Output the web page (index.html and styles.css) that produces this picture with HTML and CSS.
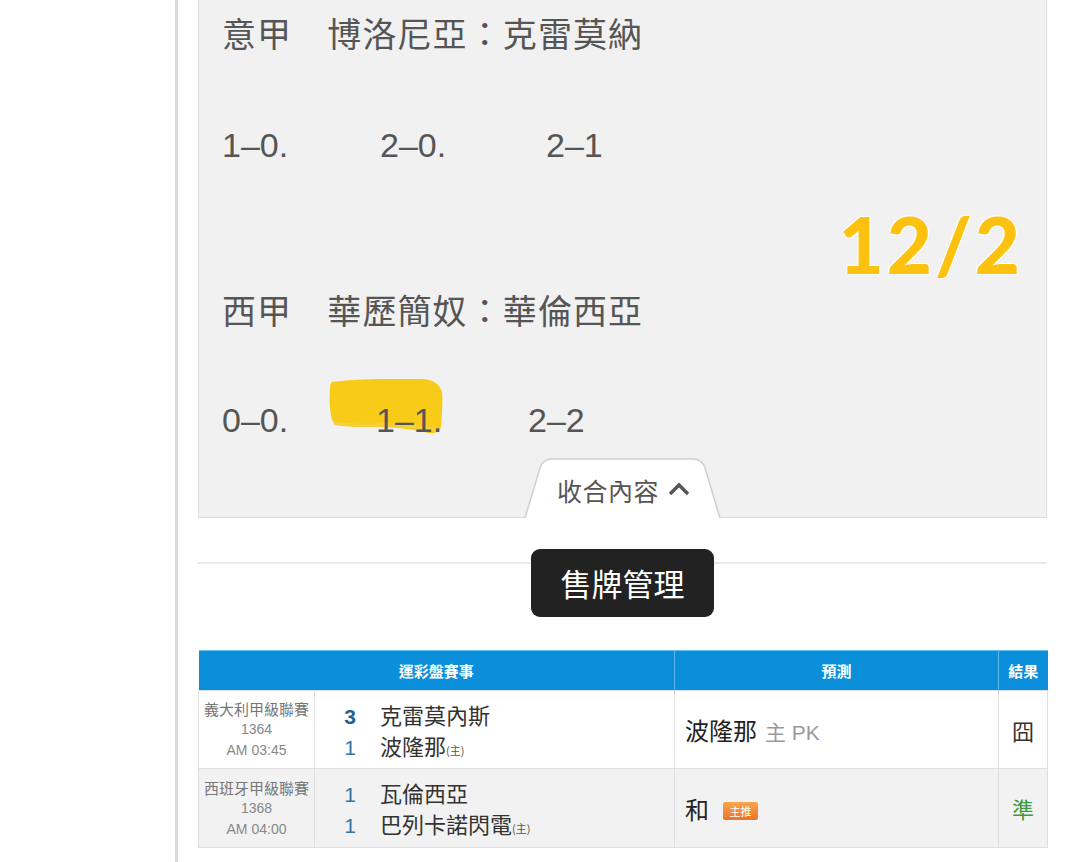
FILE: index.html
```html
<!DOCTYPE html>
<html lang="zh-Hant">
<head>
<meta charset="utf-8">
<title>售牌管理</title>
<link rel="stylesheet" href="styles.css">
</head>
<body>
<div class="page">
  <div class="post">
    <p class="line cjk l1">意甲　博洛尼亞：克雷莫納</p>
    <p class="line scores l2"><span class="s s1">1–0.</span><span class="s s2">2–0.</span><span class="s">2–1</span></p>
    <p class="line cjk l3">西甲　華歷簡奴：華倫西亞</p>
    <p class="line scores l4"><span class="s s1b">0–0.</span><span class="s mark-wrap s2b"><svg class="mark" width="116" height="58" viewBox="0 0 116 58"><path d="M4,5 C30,1 70,2 94,2 C104,2 112,7 114,15 C115,24 114,36 113,49 C112,56 104,58 96,55 C80,51 60,50 40,50 C26,50 12,50 6,47 C2,40 1,26 2,13 C2,8 3,6 4,5 Z" fill="#f8cb18"/><path d="M6,44 C20,47 40,47 60,46 C80,46 100,49 112,52 L112,55 C100,53 80,50 60,50 C40,50 20,50 6,48 Z" fill="#f6d250" opacity="0.6"/></svg><span class="txt">1–1.</span></span><span class="s">2–2</span></p>
    <div class="date">12/2</div>
    <div class="tab-row">
      <div class="tab">
        <svg class="tab-bg" width="197" height="60" viewBox="0 0 197 60"><path d="M1,60 L16,10 Q19,1 28,1 L169,1 Q178,1 181,10 L196,60" fill="#ffffff" stroke="#cfcfcf" stroke-width="1.5"/></svg>
        <span class="tab-text">收合內容</span>
        <svg class="chev" width="22" height="14" viewBox="0 0 22 14"><path d="M2,12 L11,3 L20,12" fill="none" stroke="#555" stroke-width="3.4" stroke-linejoin="miter"/></svg>
      </div>
    </div>
  </div>

  <div class="divider"></div>
  <div class="title-row"><div class="title-btn">售牌管理</div></div>

  <table class="games">
    <colgroup>
      <col class="c1"><col class="c2"><col class="c3"><col class="c4">
    </colgroup>
    <thead>
      <tr><th colspan="2">運彩盤賽事</th><th>預測</th><th>結果</th></tr>
    </thead>
    <tbody>
      <tr>
        <td class="info"><div class="league">義大利甲級聯賽</div><div class="meta">1364</div><div class="meta">AM 03:45</div></td>
        <td class="teams">
          <div class="team"><span class="num win">3</span><span class="name">克雷莫內斯</span></div>
          <div class="team"><span class="num">1</span><span class="name">波隆那<small>(主)</small></span></div>
        </td>
        <td class="pred"><span class="pick">波隆那</span><span class="sub">主 PK</span></td>
        <td class="res">囧</td>
      </tr>
      <tr class="alt">
        <td class="info"><div class="league">西班牙甲級聯賽</div><div class="meta">1368</div><div class="meta">AM 04:00</div></td>
        <td class="teams">
          <div class="team"><span class="num">1</span><span class="name">瓦倫西亞</span></div>
          <div class="team"><span class="num">1</span><span class="name">巴列卡諾閃電<small>(主)</small></span></div>
        </td>
        <td class="pred"><span class="pick">和</span><span class="badge">主推</span></td>
        <td class="res ok">準</td>
      </tr>
    </tbody>
  </table>
</div>
</body>
</html>
```
FILE: styles.css
```css
html, body {
  margin: 0;
  padding: 0;
  background: #ffffff;
}
body {
  font-family: "Liberation Sans", "Noto Sans CJK TC", sans-serif;
  color: #333;
}
.page {
  margin-left: 175px;
  width: 870px;
  min-height: 862px;
  padding: 0 20px 0 20px;
  border-left: 3px solid #dcdcdc;
  border-right: 1px solid #ededed;
  box-sizing: content-box;
}
.post {
  position: relative;
  width: 849px;
  box-sizing: border-box;
  background: #f1f1f1;
  border: 1px solid #dedede;
  border-top: none;
  padding: 5px 0 0 23px;
}
.line {
  margin: 0;
  font-size: 34px;
  line-height: 56px;
  height: 56px;
  color: #555;
  white-space: nowrap;
}
.cjk {
  font-family: "Noto Sans CJK TC", sans-serif;
  letter-spacing: 1.1px;
}
.l1 { margin-bottom: 56px; }
.l2 { margin-bottom: 109px; }
.l3 { margin-bottom: 54px; }
.scores { font-family: "Liberation Sans", sans-serif; }
.s { display: inline-block; }
.s1 { width: 158px; }
.s2 { width: 166px; }
.s1b { width: 106px; }
.s2b { width: 200px; }
.mark-wrap { position: relative; }
.mark {
  position: absolute;
  left: 0;
  top: -15px;
}
.mark-wrap .txt {
  position: relative;
  margin-left: 48px;
}
.date {
  position: absolute;
  right: 23px;
  top: 199px;
  font-family: Lato, "Liberation Sans", sans-serif;
  font-weight: 900;
  font-size: 78px;
  line-height: 90px;
  letter-spacing: 3px;
  color: #fdc20f;
  text-shadow: 0 0 2px #fff, 0 0 2px #fff, 1px 1px 1px #fff, -1px -1px 1px #fff;
}
.tab-row {
  display: flex;
  justify-content: center;
  margin: 10px 0 -1px -23px;
}
.tab {
  position: relative;
  width: 197px;
  height: 60px;
  display: flex;
  align-items: center;
  justify-content: center;
  padding-top: 4px;
  box-sizing: border-box;
}
.tab-bg {
  position: absolute;
  left: 0;
  top: 0;
}
.tab-text {
  position: relative;
  font-family: "Noto Sans CJK TC", sans-serif;
  font-size: 25px;
  color: #555;
  margin-left: 2px;
  letter-spacing: 0.5px;
}
.chev {
  position: relative;
  margin-left: 9px;
  margin-top: -2px;
}
.divider {
  width: 849px;
  margin-top: 44px;
  border-top: 2px solid #e9e9e9;
}
.title-row {
  display: flex;
  justify-content: center;
  width: 849px;
  margin-top: -15px;
}
.title-btn {
  width: 183px;
  height: 68px;
  background: #222;
  border-radius: 9px;
  color: #fff;
  font-family: "Noto Sans CJK TC", sans-serif;
  font-size: 31px;
  line-height: 68px;
  text-align: center;
}
.games {
  margin-top: 33px;
  width: 849px;
  border-collapse: collapse;
  table-layout: fixed;
  font-family: "Liberation Sans", "Noto Sans CJK TC", sans-serif;
}
.c1 { width: 116px; }
.c2 { width: 360px; }
.c3 { width: 324px; }
.c4 { width: 49px; }
.games th {
  background: #0b8fda;
  color: #fff;
  font-family: "Noto Sans CJK TC", sans-serif;
  font-weight: 700;
  font-size: 15px;
  height: 39px;
  padding: 0;
  border-left: 1px solid #5fb8ea;
  border-top: 1px solid #5cc0f0;
}
.games th:first-child { border-left: none; }
.games td {
  border: 1px solid #dedede;
  padding: 0;
  vertical-align: middle;
  height: 77px;
}
.games tr.alt td { background: #f2f2f2; height: 78px; }
.info { text-align: center; }
.league {
  font-family: "Noto Sans CJK TC", sans-serif;
  font-size: 15px;
  line-height: 21px;
  color: #777;
}
.meta {
  font-size: 14px;
  line-height: 21px;
  color: #888;
}
.teams { padding-left: 23px !important; }
.team {
  display: flex;
  align-items: baseline;
  height: 31px;
  line-height: 31px;
}
.num {
  width: 24px;
  text-align: center;
  font-size: 21px;
  color: #3575a6;
  margin-right: 18px;
}
.num.win { color: #2a5f8a; font-weight: 700; }
.name {
  font-family: "Noto Sans CJK TC", sans-serif;
  font-size: 22px;
  color: #333;
}
.name small {
  font-size: 11px;
  color: #555;
}
.pred { padding-left: 10px !important; }
.pick {
  font-family: "Noto Sans CJK TC", sans-serif;
  font-size: 24px;
  color: #222;
}
.sub {
  font-size: 21px;
  color: #9a9a9a;
  margin-left: 8px;
}
.badge {
  display: inline-block;
  vertical-align: 3px;
  margin-left: 14px;
  width: 35px;
  height: 18px;
  line-height: 18px;
  text-align: center;
  font-family: "Noto Sans CJK TC", sans-serif;
  font-size: 11px;
  color: #fff;
  border-radius: 2px;
  background: linear-gradient(#f9a550, #e9742a);
}
.res {
  text-align: center;
  font-family: "Noto Sans CJK TC", sans-serif;
  font-size: 22px;
  color: #333;
}
.res.ok { color: #3b9a3b; }
```
